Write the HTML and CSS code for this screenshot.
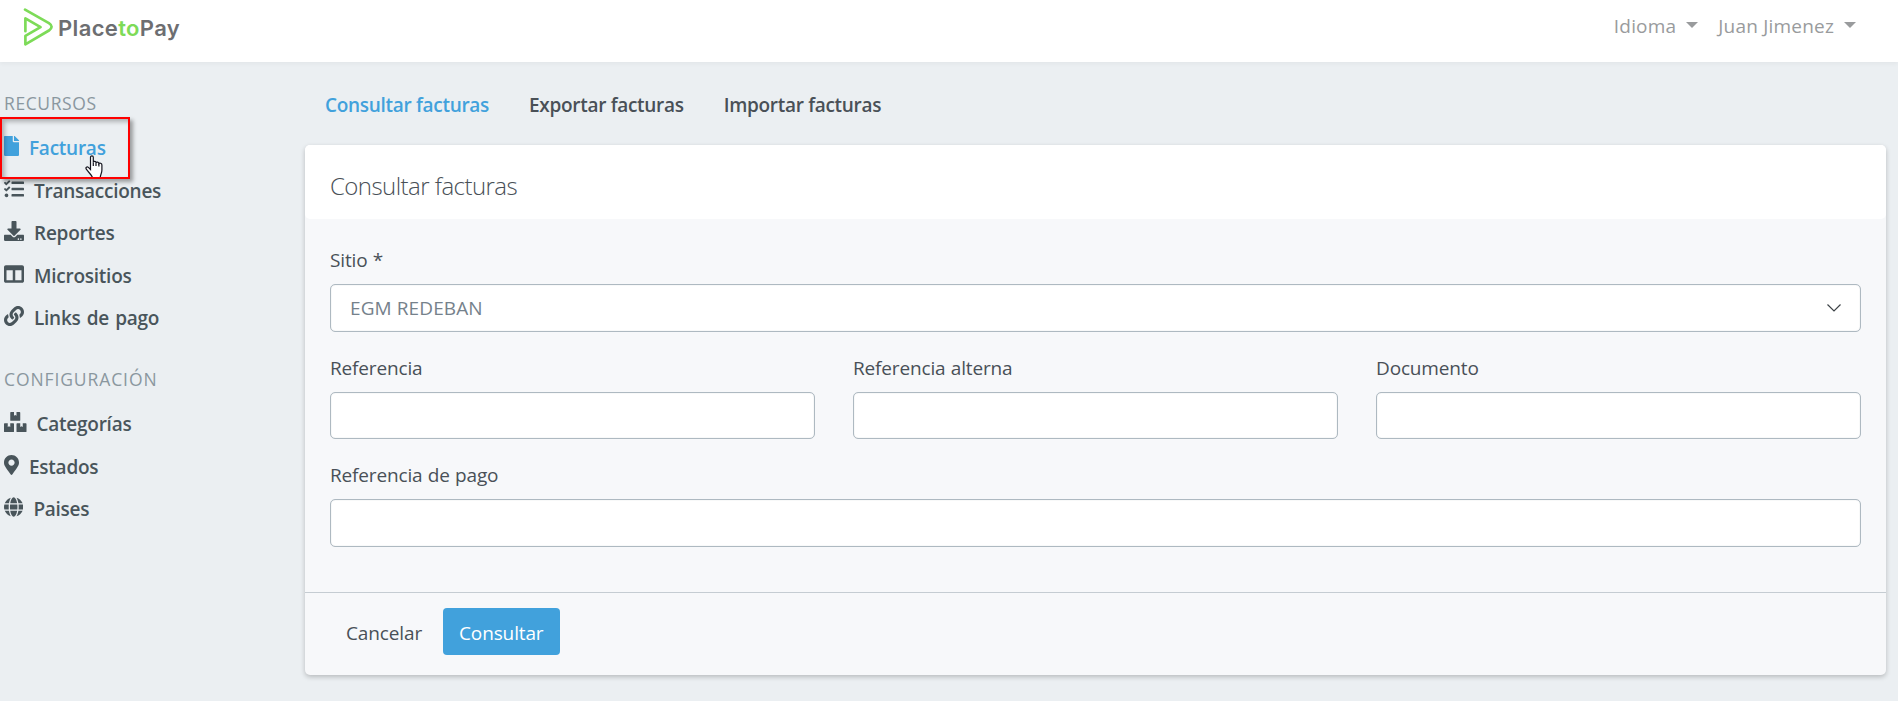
FILE: index.html
```html
<!DOCTYPE html>
<html lang="es">
<head>
<meta charset="utf-8">
<title>PlacetoPay - Consultar facturas</title>
<link rel="stylesheet" href="styles.css">
</head>
<body>
<header class="topbar">
  <a class="brand">
    <svg class="brand-mark" viewBox="70 24 92 116"><path d="M76 29 L147 69 Q163 80 147 91 L77 132 V107 L122 81 L77 55 V93"/></svg>
    <span class="brand-name">Place<span class="brand-to">to</span>Pay</span>
  </a>
  <nav class="user-nav">
    <a class="drop drop-lang">Idioma</a>
    <a class="drop drop-user">Juan Jimenez</a>
  </nav>
</header>
<div class="layout">
  <aside class="sidebar">
    <h6 class="side-title t-rec">Recursos</h6>
    <ul class="side-list">
      <li class="side-item active"><svg class="ico" viewBox="0 0 384 512"><path d="M224 136V0H24C10.7 0 0 10.7 0 24v464c0 13.3 10.7 24 24 24h336c13.3 0 24-10.7 24-24V160H248c-13.2 0-24-10.8-24-24zm160-14.1v6.1H256V0h6.1c6.4 0 12.5 2.5 17 7l97.9 98c4.5 4.5 7 10.6 7 16.9z"/></svg><span class="side-text">Facturas</span>
        <span class="highlight"></span>
        <svg class="pointer" viewBox="0 0 18 23"><path d="M5.5 2.2C5.5 .3 8.3 .3 8.3 2.2V7.4C8.6 6 11 6.1 11 7.8C11.5 6.7 13.9 6.9 13.9 8.6C14.5 7.7 16.9 8.1 16.9 10V15C16.9 18 15.5 19.5 15.2 22.5H7.5C6.5 19.5 3.5 17.5 1.3 14.2C.2 12.3 2.1 11.3 3.4 12.4L5.5 14.5Z"/><path d="M8.3 7.4V11M11 7.8V11M13.9 8.6V11.5"/></svg>
      </li>
      <li class="side-item"><svg class="ico" viewBox="0 0 512 512"><path d="M139.61 35.5a12 12 0 0 0-17 0L58.93 98.81l-22.7-22.12a12 12 0 0 0-17 0L3.53 92.41a12 12 0 0 0 0 17l47.59 47.4a12.78 12.78 0 0 0 17.61 0l15.59-15.62L156.52 69a12.09 12.09 0 0 0 .09-17zm0 159.19a12 12 0 0 0-17 0l-63.68 63.72-22.7-22.1a12 12 0 0 0-17 0L3.53 252a12 12 0 0 0 0 17L51 316.5a12.77 12.77 0 0 0 17.6 0l15.7-15.69 72.2-72.22a12 12 0 0 0 .09-16.9zM64 368c-26.49 0-48.59 21.5-48.59 48S37.53 464 64 464a48 48 0 0 0 0-96zm432 16H208a16 16 0 0 0-16 16v32a16 16 0 0 0 16 16h288a16 16 0 0 0 16-16v-32a16 16 0 0 0-16-16zm0-320H208a16 16 0 0 0-16 16v32a16 16 0 0 0 16 16h288a16 16 0 0 0 16-16V80a16 16 0 0 0-16-16zm0 160H208a16 16 0 0 0-16 16v32a16 16 0 0 0 16 16h288a16 16 0 0 0 16-16v-32a16 16 0 0 0-16-16z"/></svg><span class="side-text">Transacciones</span></li>
      <li class="side-item"><svg class="ico" viewBox="0 0 512 512"><path d="M216 0h80c13.3 0 24 10.7 24 24v168h87.7c17.8 0 26.7 21.5 14.1 34.1L269.7 378.3c-7.5 7.5-19.8 7.5-27.3 0L90.1 226.1c-12.6-12.6-3.7-34.1 14.1-34.1H192V24c0-13.3 10.7-24 24-24zm296 376v112c0 13.3-10.7 24-24 24H24c-13.3 0-24-10.7-24-24V376c0-13.3 10.7-24 24-24h146.7l49 49c20.1 20.1 52.5 20.1 72.6 0l49-49H488c13.3 0 24 10.7 24 24zm-124 88c0-11-9-20-20-20s-20 9-20 20 9 20 20 20 20-9 20-20zm64 0c0-11-9-20-20-20s-20 9-20 20 9 20 20 20 20-9 20-20z"/></svg><span class="side-text">Reportes</span></li>
      <li class="side-item"><svg class="ico" viewBox="0 0 512 512"><path d="M464 32H48C21.49 32 0 53.49 0 80v352c0 26.51 21.49 48 48 48h416c26.51 0 48-21.49 48-48V80c0-26.51-21.49-48-48-48zM224 416H64V160h160v256zm224 0H288V160h160v256z"/></svg><span class="side-text">Micrositios</span></li>
      <li class="side-item"><svg class="ico" viewBox="0 0 512 512"><path d="M326.612 185.391c59.747 59.809 58.927 155.698.36 214.59-.11.12-.24.25-.36.37l-67.2 67.2c-59.27 59.27-155.699 59.262-214.96 0-59.27-59.26-59.27-155.7 0-214.96l37.106-37.106c9.84-9.84 26.786-3.3 27.294 10.606.648 17.722 3.826 35.527 9.69 52.721 1.986 5.822.567 12.262-3.783 16.612l-13.087 13.087c-28.026 28.026-28.905 73.66-1.155 101.96 28.024 28.579 74.086 28.749 102.325.51l67.2-67.19c28.191-28.191 28.073-73.757 0-101.83-3.701-3.694-7.429-6.564-10.341-8.569a16.037 16.037 0 0 1-6.947-12.606c-.396-10.567 3.348-21.456 11.698-29.806l21.054-21.055c5.521-5.521 14.182-6.199 20.584-1.731a152.482 152.482 0 0 1 20.522 17.197zM467.547 44.449c-59.261-59.262-155.69-59.27-214.96 0l-67.2 67.2c-.12.12-.25.25-.36.37-58.566 58.892-59.387 154.781.36 214.59a152.454 152.454 0 0 0 20.521 17.196c6.402 4.468 15.064 3.789 20.584-1.731l21.054-21.055c8.35-8.35 12.094-19.239 11.698-29.806a16.037 16.037 0 0 0-6.947-12.606c-2.912-2.005-6.64-4.875-10.341-8.569-28.073-28.073-28.191-73.639 0-101.83l67.2-67.19c28.239-28.239 74.3-28.069 102.325.51 27.75 28.3 26.872 73.934-1.155 101.96l-13.087 13.087c-4.35 4.35-5.769 10.79-3.783 16.612 5.864 17.194 9.042 34.999 9.69 52.721.509 13.906 17.454 20.446 27.294 10.606l37.106-37.106c59.271-59.259 59.271-155.699.001-214.959z"/></svg><span class="side-text">Links de pago</span></li>
    </ul>
    <h6 class="side-title t-conf">Configuración</h6>
    <ul class="side-list">
      <li class="side-item"><svg class="ico" viewBox="0 0 576 512"><path d="M560 288h-80v96l-32-21.3-32 21.3v-96h-80c-8.8 0-16 7.2-16 16v192c0 8.8 7.2 16 16 16h224c8.8 0 16-7.2 16-16V304c0-8.8-7.2-16-16-16zm-384-64h224c8.8 0 16-7.2 16-16V16c0-8.8-7.2-16-16-16h-80v96l-32-21.3L256 96V0h-80c-8.8 0-16 7.2-16 16v192c0 8.8 7.2 16 16 16zm64 64h-80v96l-32-21.3L96 384v-96H16c-8.8 0-16 7.2-16 16v192c0 8.8 7.2 16 16 16h224c8.8 0 16-7.2 16-16V304c0-8.8-7.2-16-16-16z"/></svg><span class="side-text">Categorías</span></li>
      <li class="side-item"><svg class="ico" viewBox="0 0 384 512"><path d="M172.268 501.67C26.97 291.031 0 269.413 0 192 0 85.961 85.961 0 192 0s192 85.961 192 192c0 77.413-26.97 99.031-172.268 309.67-9.535 13.774-29.93 13.773-39.464 0zM192 272c44.183 0 80-35.817 80-80s-35.817-80-80-80-80 35.817-80 80 35.817 80 80 80z"/></svg><span class="side-text">Estados</span></li>
      <li class="side-item"><svg class="ico" viewBox="0 0 496 512"><path d="M336.5 160C322 70.7 287.8 8 248 8s-74 62.7-88.5 152h177zM152 256c0 22.2 1.2 43.5 3.3 64h185.3c2.1-20.5 3.3-41.8 3.3-64s-1.2-43.5-3.3-64H155.3c-2.1 20.5-3.3 41.8-3.3 64zm324.7-96c-28.6-67.9-86.5-120.4-158-141.6 24.4 33.8 41.2 84.7 50 141.6h108zM177.2 18.4C105.8 39.6 47.8 92.1 19.3 160h108c8.7-56.9 25.5-107.8 49.9-141.6zM487.4 192H372.7c2.1 21 3.3 42.5 3.3 64s-1.2 43-3.3 64h114.6c5.5-20.5 8.6-41.8 8.6-64s-3.1-43.5-8.5-64zM120 256c0-21.5 1.2-43 3.3-64H8.6C3.2 212.5 0 233.8 0 256s3.2 43.5 8.6 64h114.6c-2-21-3.2-42.5-3.2-64zm39.5 96c14.5 89.3 48.7 152 88.5 152s74-62.7 88.5-152h-177zm159.3 141.6c71.4-21.2 129.4-73.7 158-141.6h-108c-8.8 56.9-25.6 107.8-50 141.6zM19.3 352c28.6 67.9 86.5 120.4 158 141.6-24.4-33.8-41.2-84.7-50-141.6h-108z"/></svg><span class="side-text">Paises</span></li>
    </ul>
  </aside>
  <main class="content">
    <nav class="tabs">
      <a class="tab tab-active">Consultar facturas</a>
      <a class="tab">Exportar facturas</a>
      <a class="tab">Importar facturas</a>
    </nav>
    <section class="card">
      <h5 class="card-title"><span>Consultar facturas</span></h5>
      <form class="form">
        <div class="field wide">
          <label class="label">Sitio *</label>
          <div class="control select"><span class="select-value">EGM REDEBAN</span><svg class="chevron" viewBox="0 0 16 10"><path d="M1.5 1.5 8 8 14.5 1.5"/></svg></div>
        </div>
        <div class="field"><label class="label">Referencia</label><input class="control" type="text"></div>
        <div class="field"><label class="label">Referencia alterna</label><input class="control" type="text"></div>
        <div class="field"><label class="label">Documento</label><input class="control" type="text"></div>
        <div class="field wide"><label class="label">Referencia de pago</label><input class="control" type="text"></div>
      </form>
      <footer class="actions">
        <a class="btn">Cancelar</a>
        <a class="btn btn-primary">Consultar</a>
      </footer>
    </section>
  </main>
</div>
</body>
</html>
```
FILE: styles.css
```css
* { box-sizing: border-box; }
body {
  margin: 0;
  height: 701px;
  overflow: hidden;
  background: #ebeff2;
  color: #495057;
  font-family: "Open Sans", "Noto Sans", sans-serif;
  font-size: 19px;
}
.topbar {
  position: relative;
  display: flex;
  justify-content: space-between;
  height: 62px;
  padding: 8px 42px 0 23px;
  background: #fff;
  box-shadow: 0 2px 4px rgba(0, 0, 0, .04);
}
.brand { display: flex; gap: 4px; }
.brand-mark { width: 31px; height: 39px; fill: none; stroke: #7ddb58; stroke-width: 8; stroke-linecap: round; stroke-linejoin: round; }
.brand-name { font: 600 22px/40px Inter, sans-serif; color: #6d6e71; letter-spacing: .35px; }
.brand-to { color: #7ddb58; }
.user-nav { display: flex; gap: 20px; line-height: 36px; color: #999b9d; letter-spacing: .2px; }
.drop { display: flex; align-items: center; height: 36px; gap: 10px; }
.drop::after { content: ""; border: 6px solid transparent; border-top-color: #999b9d; border-bottom: 0; margin-top: -2px; }
.layout { display: flex; }
.sidebar { width: 305px; padding: 29px 0 0 4px; }
.side-title { margin: 0 0 11px; font-size: 17.5px; line-height: 24px; font-weight: 400; color: #8a979f; text-transform: uppercase; letter-spacing: .6px; }
.t-conf { margin-top: 28.5px; letter-spacing: .9px; }
.side-list { margin: 0; padding: 0; list-style: none; }
.side-item { position: relative; display: flex; align-items: center; gap: 10px; height: 42.5px; line-height: 42.5px; font-weight: 600; color: #49555b; letter-spacing: -.25px; word-spacing: 1.5px; }
.side-text { padding-top: 2px; }
.ico { height: 20px; fill: currentColor; margin-top: -2px; }
.active { color: #41a1dc; }
.highlight { position: absolute; left: -4px; top: -9px; width: 130px; height: 62px; border: 2px solid #f00; box-shadow: 3px 3px 4px rgba(0, 0, 0, .35), inset 3px 3px 4px rgba(0, 0, 0, .25); z-index: 2; }
.pointer { position: absolute; left: 81px; top: 29px; width: 18px; height: 23px; fill: #fff; stroke: #15151f; stroke-width: 1.2; }
.content { flex: 1; padding: 0 12px 0 0; }
.tabs { display: flex; gap: 40px; padding: 23px 0 0 20px; height: 83px; line-height: 40px; font-weight: 600; letter-spacing: -.3px; }
.tab-active { color: #41a1dc; }
.card { height: 530px; border-radius: 5px; background: #f7f8fa; box-shadow: 0 2px 5px rgba(0, 0, 0, .22); }
.card-title { margin: 0; height: 74px; padding-left: 25px; border-radius: 5px; background: #fff; font-size: 24px; line-height: 81px; font-weight: 300; letter-spacing: -.55px; }
.form { display: grid; grid-template-columns: repeat(3, 1fr); gap: 20px 38px; height: 373px; padding: 21px 25px 0; align-content: start; }
.wide { grid-column: 1 / -1; }
.field { height: 87.5px; }
.label { display: block; height: 40px; padding-top: 5px; line-height: 30px; letter-spacing: -.15px; word-spacing: .5px; }
.control { display: flex; width: 100%; height: 47.5px; margin: 4px 0 0; border: 1px solid #aeb9c1; border-radius: 5px; background: #fff; box-shadow: inset 0 0 1px rgba(80, 100, 115, .4); }
.select { align-items: center; justify-content: space-between; padding: 0 18px 0 19px; color: #75818b; }
.select-value { padding-top: 1px; letter-spacing: .1px; }
.chevron { width: 16px; height: 10px; fill: none; stroke: #3d4347; stroke-width: 1.2; }
.actions { display: flex; height: 83px; padding: 15px 0 0 25px; border-top: 1px solid #c5ccd2; }
.btn { height: 47px; padding: 0 16px; line-height: 50px; letter-spacing: -.13px; }
.btn-primary { margin-left: 5px; border-radius: 4px; background: #41a1dc; color: #fff; }
```
